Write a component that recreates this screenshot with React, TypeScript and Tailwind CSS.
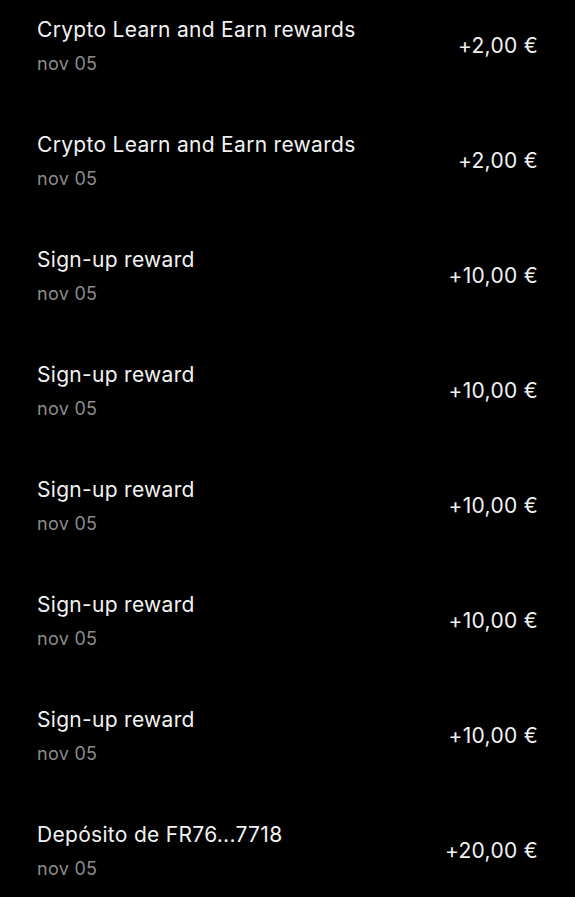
const rows = [
  { title: "Crypto Learn and Earn rewards", amount: "+2,00 €" },
  { title: "Crypto Learn and Earn rewards", amount: "+2,00 €" },
  { title: "Sign-up reward", amount: "+10,00 €" },
  { title: "Sign-up reward", amount: "+10,00 €" },
  { title: "Sign-up reward", amount: "+10,00 €" },
  { title: "Sign-up reward", amount: "+10,00 €" },
  { title: "Sign-up reward", amount: "+10,00 €" },
  { title: "Depósito de FR76...7718", amount: "+20,00 €" },
];

export default function App() {
  return (
    <div className="min-h-[897px] w-[575px] bg-black font-['Inter',sans-serif] text-[#f2f2f2] overflow-hidden">
      {rows.map((row, i) => (
        <div key={i} className="flex h-[115px] items-start pl-[37px] pr-[37px] pt-4">
          <div className="flex w-full items-center justify-between">
            <div className="flex flex-col">
              <span className="text-[21px] leading-[28px] tracking-[0.3px]">{row.title}</span>
              <span className="mt-2 text-[18px] leading-[24px] tracking-[0.3px] text-[#8c8c8c]">nov 05</span>
            </div>
            <span className="text-[21px] leading-[28px] tracking-[0.3px]">{row.amount}</span>
          </div>
        </div>
      ))}
    </div>
  );
}
